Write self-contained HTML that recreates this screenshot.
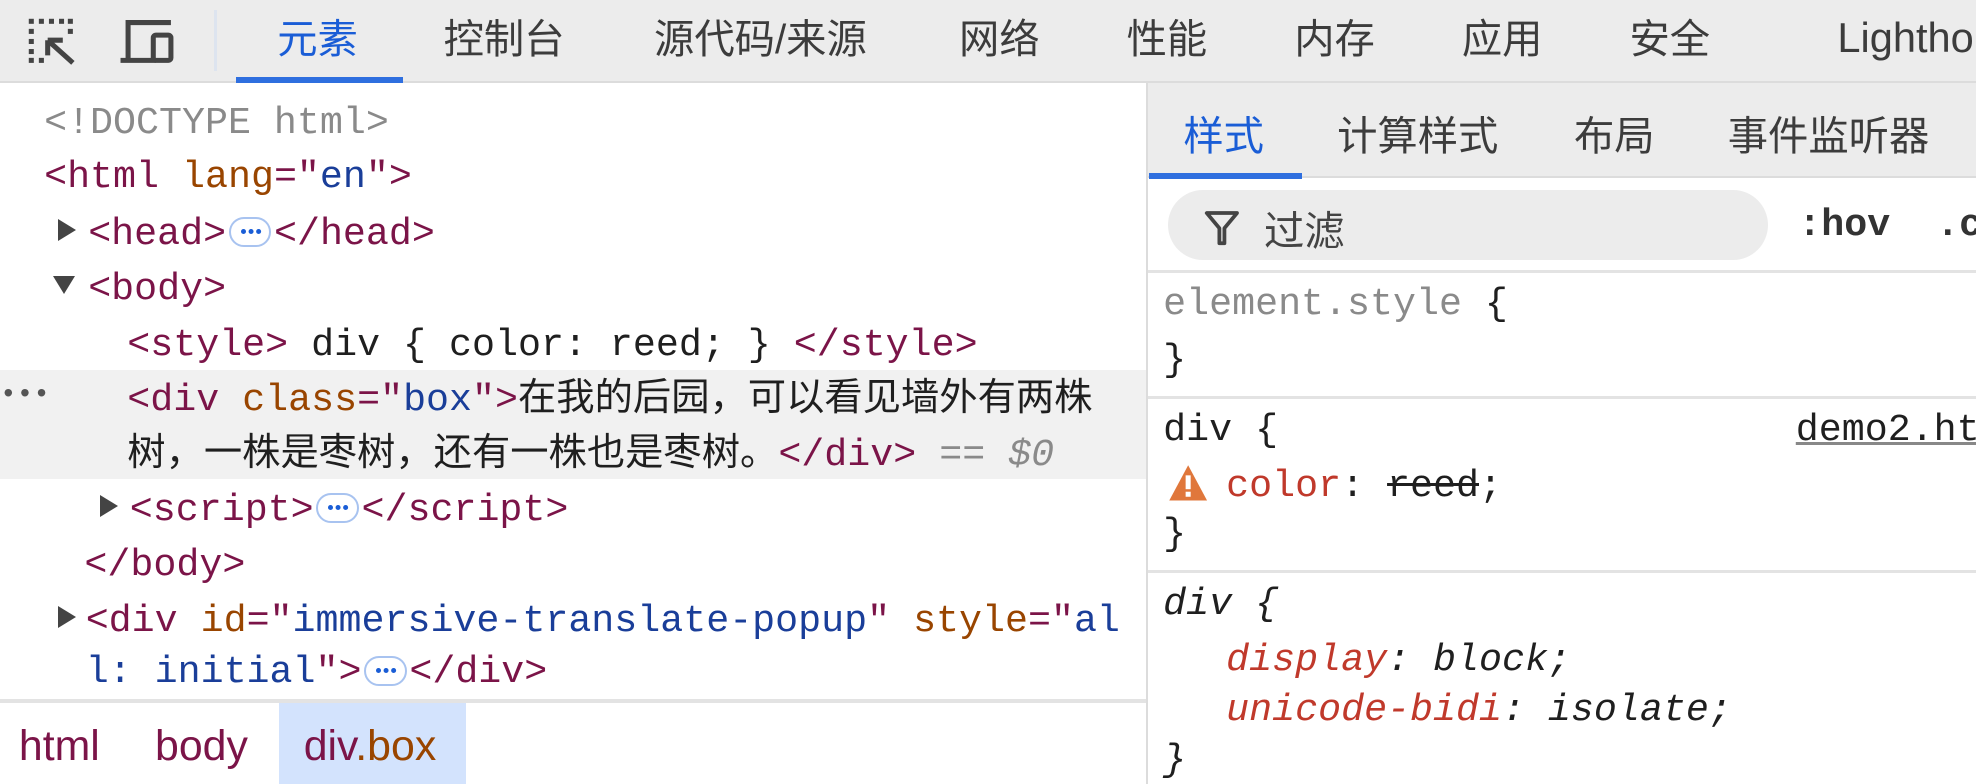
<!DOCTYPE html>
<html><head><meta charset="utf-8"><style>
html,body{margin:0;padding:0;width:1976px;height:784px;overflow:hidden;background:#fff}
#w{zoom:1.2602;width:1568px;height:622px;position:relative;overflow:hidden;font-family:"Liberation Sans","Noto Sans CJK SC",sans-serif}
.a{position:absolute;white-space:pre}
.top{left:0;top:0;width:1568px;height:64px;background:#ececec;border-bottom:2px solid #dcdcdc}
.tab{top:5px;font-size:32px;color:#3c3c3c}
.m{font-family:"Liberation Mono","Noto Sans CJK SC",monospace;font-size:30.4px;line-height:44px}
.t{color:#7b1448}.n{color:#994500}.v{color:#1a3e99}.g{color:#8a8a8a}.k{color:#1f1f1f}
.tri{width:0;height:0;border-top:9px solid transparent;border-bottom:9px solid transparent;border-left:15px solid #444}
.trd{width:0;height:0;border-left:9px solid transparent;border-right:9px solid transparent;border-top:15px solid #444}
.el{display:inline-block;width:34px;height:24px;border:2px solid #a8c3f0;border-radius:12px;vertical-align:-3px;position:relative;margin:0 2px;box-sizing:border-box}
.el:after{content:"";position:absolute;left:8px;top:8px;width:4px;height:4px;border-radius:2px;background:#1a5dd6;box-shadow:6px 0 #1a5dd6,12px 0 #1a5dd6}
.hr{height:2px;background:#e3e3e3}
</style></head><body><div id="w">
<div class="a top"></div>
<svg class="a" style="left:20px;top:12px" width="42" height="40" viewBox="0 0 42 40">
<g fill="#444"><rect x="3" y="3" width="4" height="4"/><rect x="11" y="3" width="4" height="4"/><rect x="19" y="3" width="4" height="4"/><rect x="27" y="3" width="4" height="4"/><rect x="34" y="3" width="4" height="4"/><rect x="3" y="11" width="4" height="4"/><rect x="3" y="19" width="4" height="4"/><rect x="3" y="27" width="4" height="4"/><rect x="3" y="34" width="4" height="4"/><rect x="11" y="34" width="4" height="4"/><rect x="34" y="11" width="4" height="4"/></g>
<path d="M18 20 L38 38 M18 20 H30 M18 20 V32" stroke="#444" stroke-width="4" fill="none"/></svg>
<svg class="a" style="left:94px;top:12px" width="50" height="40" viewBox="0 0 50 40">
<path d="M8 34 V6 H42 M2 36 H30" stroke="#444" stroke-width="4" fill="none"/><rect x="28" y="16" width="14" height="20" rx="2" stroke="#444" stroke-width="4" fill="none"/></svg>
<div class="a" style="left:170px;top:8px;width:2px;height:48px;background:#dde4ef"></div>
<div class="a tab" style="left:220px;color:#1a5dd6">元素</div>
<div class="a" style="left:187px;top:61px;width:133px;height:5px;background:#2f6fdf"></div>
<div class="a tab" style="left:352px">控制台</div>
<div class="a tab" style="left:519px">源代码/来源</div>
<div class="a tab" style="left:761px">网络</div>
<div class="a tab" style="left:894px">性能</div>
<div class="a tab" style="left:1027px">内存</div>
<div class="a tab" style="left:1160px">应用</div>
<div class="a tab" style="left:1293px">安全</div>
<div class="a tab" style="left:1458px;top:11px;font-size:33px">Lighthouse</div>

<div class="a" style="left:0;top:294px;width:909px;height:86px;background:#f1f1f1"></div>
<div class="a m g" style="left:35px;top:76px">&lt;!DOCTYPE html&gt;</div>
<div class="a m" style="left:35px;top:119px"><span class="t">&lt;html</span> <span class="n">lang</span><span class="t">="</span><span class="v">en</span><span class="t">"&gt;</span></div>
<div class="a tri" style="left:46px;top:174px"></div>
<div class="a m t" style="left:70px;top:164px">&lt;head&gt;<span class="el"></span>&lt;/head&gt;</div>
<div class="a trd" style="left:42px;top:219px"></div>
<div class="a m t" style="left:70px;top:208px">&lt;body&gt;</div>
<div class="a m" style="left:101px;top:252px"><span class="t">&lt;style&gt;</span><span class="k"> div { color: reed; } </span><span class="t">&lt;/style&gt;</span></div>
<div class="a m k" style="left:0;top:292px;font-size:22px;color:#555">•••</div>
<div class="a m" style="left:101px;top:296px"><span class="t">&lt;div</span> <span class="n">class</span><span class="t">="</span><span class="v">box</span><span class="t">"&gt;</span><span class="k">在我的后园，可以看见墙外有两株</span></div>
<div class="a m" style="left:101px;top:340px"><span class="k">树，一株是枣树，还有一株也是枣树。</span><span class="t">&lt;/div&gt;</span> <span class="g">== <i>$0</i></span></div>
<div class="a tri" style="left:79px;top:393px"></div>
<div class="a m t" style="left:103px;top:383px">&lt;script&gt;<span class="el"></span>&lt;/script&gt;</div>
<div class="a m t" style="left:67px;top:427px">&lt;/body&gt;</div>
<div class="a tri" style="left:46px;top:481px"></div>
<div class="a m" style="left:68px;top:471px"><span class="t">&lt;div</span> <span class="n">id</span><span class="t">="</span><span class="v">immersive-translate-popup</span><span class="t">"</span> <span class="n">style</span><span class="t">="</span><span class="v">al</span></div>
<div class="a m" style="left:68px;top:512px"><span class="v">l: initial</span><span class="t">"&gt;<span class="el"></span>&lt;/div&gt;</span></div>
<div class="a hr" style="left:0;top:555px;width:909px;height:3px"></div>
<div class="a" style="left:221px;top:558px;width:149px;height:64px;background:#d3e3fd"></div>
<div class="a" style="left:15px;top:573px;font-size:34px;color:#7b1448">html</div>
<div class="a" style="left:123px;top:573px;font-size:34px;color:#7b1448">body</div>
<div class="a" style="left:241px;top:573px;font-size:34px;color:#7b1448">div<span style="color:#994500">.box</span></div>

<div class="a" style="left:909px;top:66px;width:2px;height:556px;background:#dcdcdc"></div>

<div class="a" style="left:911px;top:66px;width:657px;height:74px;background:#ececec;border-bottom:2px solid #dcdcdc"></div>
<div class="a tab" style="left:939px;top:82px;color:#1a5dd6">样式</div>
<div class="a" style="left:912px;top:137px;width:121px;height:5px;background:#2f6fdf"></div>
<div class="a tab" style="left:1061px;top:82px">计算样式</div>
<div class="a tab" style="left:1249px;top:82px">布局</div>
<div class="a tab" style="left:1371px;top:82px">事件监听器</div>
<div class="a" style="left:927px;top:151px;width:476px;height:55px;border-radius:28px;background:#ececec"></div>
<svg class="a" style="left:955px;top:165px" width="30" height="30" viewBox="0 0 30 30"><path d="M3 4 H27 L17 16 V28 H13 V16 Z" fill="none" stroke="#444" stroke-width="3" stroke-linejoin="round"/></svg>
<div class="a" style="left:1003px;top:157px;font-size:32px;color:#444">过滤</div>
<div class="a m k" style="left:1427px;top:157px;font-weight:bold;color:#333">:hov  .cls</div>
<div class="a hr" style="left:911px;top:214px;width:657px;height:3px"></div>
<div class="a m" style="left:923px;top:220px"><span class="g">element.style</span> <span class="k">{</span></div>
<div class="a m k" style="left:923px;top:264px">}</div>
<div class="a hr" style="left:911px;top:314px;width:657px;height:3px"></div>
<div class="a m k" style="left:923px;top:320px">div {</div>
<div class="a m k" style="left:1425px;top:320px;text-decoration:underline;text-decoration-color:#888">demo2.html</div>
<svg class="a" style="left:927px;top:368px" width="32" height="30" viewBox="0 0 32 30"><path d="M16 1 L31 29 H1 Z" fill="#e0773b"/><rect x="14" y="9" width="4" height="11" fill="#fff"/><rect x="14" y="22" width="4" height="4" fill="#fff"/></svg>
<div class="a m" style="left:973px;top:364px"><span style="color:#c0392b">color</span><span class="k">: <s>reed</s>;</span></div>
<div class="a m k" style="left:923px;top:402px">}</div>
<div class="a hr" style="left:911px;top:452px;width:657px;height:3px"></div>
<div class="a m k" style="left:923px;top:458px;font-style:italic">div {</div>
<div class="a m" style="left:973px;top:502px;font-style:italic"><span style="color:#c0392b">display</span><span class="k">: block;</span></div>
<div class="a m" style="left:973px;top:542px;font-style:italic"><span style="color:#c0392b">unicode-bidi</span><span class="k">: isolate;</span></div>
<div class="a m k" style="left:923px;top:582px;font-style:italic">}</div>
</div></body></html>
